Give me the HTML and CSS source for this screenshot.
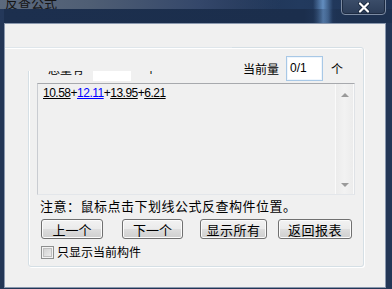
FILE: index.html
```html
<!DOCTYPE html>
<html lang="zh">
<head>
<meta charset="utf-8">
<title>反查公式</title>
<link rel="stylesheet" href="styles.css">
</head>
<body>
<div class="window">
  <div class="titlebar">
    <div class="caption"><span class="title">反查公式</span></div>
    <div class="band"></div>
    <div class="close">
      <svg width="14" height="11" viewBox="0 0 14 11">
        <path d="M3 1.5 L11 9.5 M11 1.5 L3 9.5" stroke="#1b2a40" stroke-width="4" stroke-linecap="round" fill="none"/>
        <path d="M3 1.5 L11 9.5 M11 1.5 L3 9.5" stroke="#ffffff" stroke-width="2.2" stroke-linecap="round" fill="none"/>
      </svg>
    </div>
  </div>
  <div class="client">
    <div class="panel">
      <div class="row-count">
        <div class="count-group">
          <span class="lbl">总量有</span><span class="blank"></span><span class="lbl unit-left">个</span>
        </div>
        <div class="count-group">
          <span class="lbl">当前量</span><span class="field">0/1</span><span class="lbl unit">个</span>
        </div>
      </div>
      <div class="formula-box">
        <div class="formula"><span class="ref">10.58</span>+<span class="ref blue">12.11</span>+<span class="ref">13.95</span>+<span class="ref">6.21</span></div>
        <div class="scroll">
          <span class="arrow up"></span>
          <span class="arrow down"></span>
        </div>
      </div>
      <div class="note">注意：鼠标点击下划线公式反查构件位置。</div>
      <div class="buttons">
        <button class="btn b-prev">上一个</button>
        <button class="btn b-next">下一个</button>
        <button class="btn b-all">显示所有</button>
        <button class="btn b-back">返回报表</button>
      </div>
      <label class="check"><span class="box"></span><span>只显示当前构件</span></label>
    </div>
    <div class="cover"></div>
  </div>
</div>
</body>
</html>
```
FILE: styles.css
```css
html, body {
  margin: 0;
  padding: 0;
}
body {
  width: 392px;
  height: 289px;
  overflow: hidden;
  background: #233656;
  font-family: "Noto Sans CJK SC", "Noto Sans", sans-serif;
}
.window {
  width: 392px;
  height: 289px;
  display: flex;
  flex-direction: column;
}
.titlebar {
  position: relative;
  height: 23px;
  flex: none;
  background:
    linear-gradient(90deg, rgba(110,160,215,0) 313px, rgba(120,170,225,0.75) 323px, rgba(110,160,215,0) 333px),
    linear-gradient(90deg, #24385a 0px, #1e3252 200px, #223a5e 300px, #1f3456 392px);
}
.caption {
  height: 9px;
  overflow: hidden;
  background: linear-gradient(90deg, #5c6a7e 0px, #4f5e74 90px, #34476a 200px, rgba(40,60,95,0) 280px);
}
.title {
  display: block;
  margin: -5px 0 0 5px;
  font-size: 13px;
  line-height: 15px;
  color: #141414;
}
.band {
  height: 14px;
  margin-left: 4px;
  background: linear-gradient(90deg, #1c2f4e 0px, #1b2e4c 300px, rgba(27,46,76,0.3) 318px, rgba(27,46,76,0) 325px, rgba(27,46,76,0.5) 332px, #1d3150 345px);
}
.close {
  position: absolute;
  left: 341px;
  top: -2px;
  width: 43px;
  height: 15px;
  border: 1px solid #7d8ca3;
  border-radius: 0 0 4px 4px;
  background: linear-gradient(#3c4e6a, #2c3d58);
  box-shadow: inset 0 0 0 1px #1d2b42;
  display: flex;
  align-items: center;
  justify-content: center;
}
.close svg {
  display: block;
  margin-top: 1px;
}
.client {
  position: relative;
  flex: none;
  margin-left: 4px;
  border: 1px solid #8a98ae;
  background: #f0f0f0;
  padding: 23px 0 0 23px;
  box-sizing: border-box;
  height: 265px;
  width: 382px;
}
.panel {
  width: 336px;
  height: 220px;
  box-sizing: border-box;
  border: 1px solid #d5dfe5;
  border-radius: 3px;
  box-shadow: inset 1px 1px 0 #ffffff, 1px 1px 0 #ffffff;
  display: flex;
  flex-direction: column;
  align-items: flex-start;
}
.cover {
  position: absolute;
  left: 0;
  top: 23px;
  width: 227px;
  height: 23px;
  background: #f0f0f0;
  border-top: 1px solid #dfe6eb;
  box-shadow: inset 0 1px 0 #ffffff;
}
.row-count {
  margin-top: 8px;
  width: 100%;
  box-sizing: border-box;
  padding: 0 20px 0 19px;
  height: 25px;
  display: flex;
  justify-content: space-between;
  align-items: center;
}
.count-group {
  display: flex;
  align-items: center;
}
.lbl {
  font-size: 12px;
  line-height: 16px;
  color: #000;
}
.blank {
  width: 38px;
  height: 22px;
  margin-left: 9px;
  margin-top: 2px;
  background: #ffffff;
}
.unit-left {
  margin-left: 14px;
}
.field {
  width: 37px;
  height: 25px;
  box-sizing: border-box;
  margin-left: 7px;
  border: 1px solid #a8c8e6;
  box-shadow: inset 0 0 0 1px #eef5fc;
  background: #ffffff;
  font-family: "Liberation Sans", sans-serif;
  font-size: 12px;
  line-height: 22px;
  padding-left: 3px;
  color: #000;
}
.unit {
  margin-left: 8px;
}
.formula-box {
  margin: 2px 0 0 8px;
  width: 318px;
  height: 112px;
  box-sizing: border-box;
  border: 1px solid;
  border-color: #a7a9ad #dfe2e6 #e3e6ea #c9ccd1;
  background: #f0f0f0;
  display: flex;
}
.formula {
  flex: 1;
  padding: 2px 0 0 5px;
  font-family: "Liberation Sans", sans-serif;
  font-size: 12px;
  line-height: 15px;
  letter-spacing: -0.5px;
  color: #000;
  white-space: nowrap;
}
.ref {
  text-decoration: underline;
}
.blue {
  color: #0000ff;
}
.scroll {
  width: 17px;
  border-left: 1px solid #fafafa;
  border-right: 1px solid #fafafa;
  background: linear-gradient(90deg, #ececec, #f2f2f2 50%, #ececec);
  display: flex;
  flex-direction: column;
  justify-content: space-between;
  align-items: center;
  padding: 9px 0 7px;
}
.arrow {
  width: 0;
  height: 0;
  border-left: 4px solid transparent;
  border-right: 4px solid transparent;
}
.arrow.up {
  border-bottom: 4px solid #9a9a9a;
}
.arrow.down {
  border-top: 4px solid #9a9a9a;
}
.note {
  margin: 3px 0 0 11px;
  font-size: 13px;
  line-height: 16px;
  letter-spacing: 0.5px;
  color: #000;
  white-space: nowrap;
}
.buttons {
  margin-top: 5px;
  display: flex;
  padding-left: 12px;
}
.btn {
  height: 20px;
  box-sizing: border-box;
  padding: 0;
  border: 1px solid #707070;
  border-radius: 3px;
  background: linear-gradient(#f2f2f2 0%, #ebebeb 48%, #dddddd 52%, #cfcfcf 100%);
  box-shadow: inset 0 0 0 1px #fbfbfb;
  font-family: "Noto Sans CJK SC", sans-serif;
  font-size: 13px;
  line-height: 17px;
  color: #000;
}
.b-prev { width: 62px; }
.b-next { width: 61px; margin-left: 19px; }
.b-all { width: 67px; margin-left: 17px; letter-spacing: 0.5px; }
.b-back { width: 74px; margin-left: 11px; letter-spacing: 0.5px; }
.check {
  margin: 5px 0 0 12px;
  display: flex;
  align-items: center;
  font-size: 12px;
  line-height: 16px;
  color: #000;
}
.box {
  width: 13px;
  height: 13px;
  box-sizing: border-box;
  margin-right: 3px;
  border: 1px solid #8e8f8f;
  background: linear-gradient(135deg, #cbcbcb, #f3f3f3);
  box-shadow: inset 0 0 0 1px #f4f4f4, inset 0 0 0 2px #c0c0c0;
}
```
